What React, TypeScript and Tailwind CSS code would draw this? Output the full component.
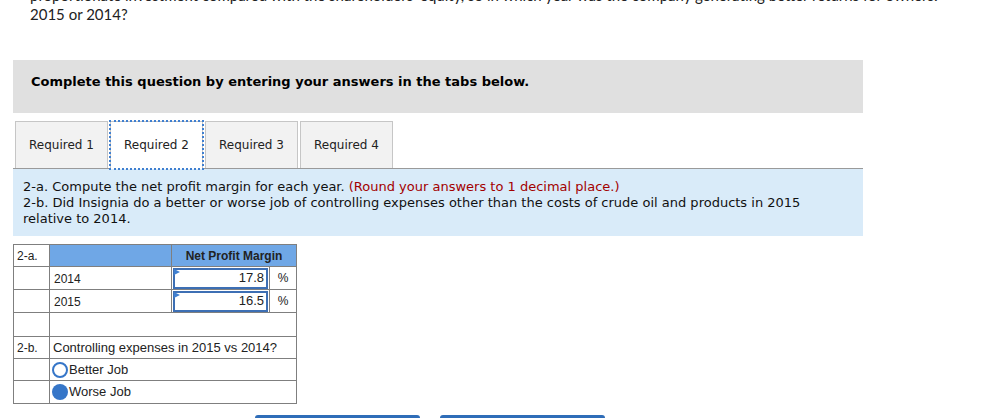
import React from "react";

const tabs = ["Required 1", "Required 2", "Required 3", "Required 4"];

function InputCell({ value }: { value: string }) {
  return (
    <td className="border border-[#7f7f7f] p-0 h-[23px]">
      <div className="relative h-[21px] mx-[1px] border-2 border-[#3d6fb4] bg-white flex items-center justify-end pr-[2px]">
        <span className="absolute left-[-1px] top-[-1px] w-0 h-0 border-t-[3px] border-b-[3px] border-l-[6px] border-t-transparent border-b-transparent border-l-[#3f7fd0]" />
        {value}
      </div>
    </td>
  );
}

function Radio({ checked }: { checked?: boolean }) {
  return checked ? (
    <span className="inline-block w-[16px] h-[16px] rounded-full bg-[#3676c8] mr-[1px]" />
  ) : (
    <span className="inline-block w-[16px] h-[16px] rounded-full border-2 border-[#3676c8] bg-white mr-[1px]" />
  );
}

export default function App() {
  return (
    <div className="w-[984px] h-[418px] overflow-hidden bg-white">
      <div className="px-[30px] mt-[-14px] text-[15px] leading-[19px] text-[#222] font-['Lato',sans-serif] whitespace-nowrap overflow-hidden">
        <p>
          proportionate investment compared with the shareholders' equity, so in which year was the company generating better returns for owners:
        </p>
        <p>2015 or 2014?</p>
      </div>

      <div className="mx-[13px] w-[850px] mt-[36px]">
        <div className="h-[53px] bg-[#e0e0e0] pt-[14px] pl-[18px]">
          <p className="font-['DejaVu_Sans',Verdana,sans-serif] font-bold text-[13px] leading-[16px] text-black">
            Complete this question by entering your answers in the tabs below.
          </p>
        </div>

        <div className="mt-[8px] flex gap-[2px] pl-[2px] border-b border-[#9a9a9a] font-['DejaVu_Sans',Verdana,sans-serif] text-[12px] text-[#222]">
          {tabs.map((t, i) =>
            i === 1 ? (
              <div
                key={t}
                className="w-[93px] h-[48px] -mb-[1px] pb-[1px] bg-white flex items-center justify-center outline-2 outline-dotted outline-[#3f7fd0] outline-offset-[-1px] border border-[#c6c6c6] border-b-0"
              >
                {t}
              </div>
            ) : (
              <div
                key={t}
                className="w-[93px] h-[47px] bg-[#f2f2f2] border border-[#c6c6c6] border-b-0 flex items-center justify-center"
              >
                {t}
              </div>
            )
          )}
        </div>

        <div className="bg-[#d9ebf9] pt-[10px] pb-[9px] pl-[10px] pr-[20px] font-['DejaVu_Sans',Verdana,sans-serif] text-[13px] leading-[16px] text-[#111]">
          <p>
            2-a. Compute the net profit margin for each year.{" "}
            <span className="text-[#a30000]">(Round your answers to 1 decimal place.)</span>
          </p>
          <p>
            2-b. Did Insignia do a better or worse job of controlling expenses other than the costs of crude oil and products in 2015 relative to 2014.
          </p>
        </div>

        <table className="mt-[8px] border-collapse font-['Liberation_Sans',Arial,sans-serif] text-[13px] text-[#222]">
          <colgroup>
            <col className="w-[36px]" />
            <col className="w-[122px]" />
            <col className="w-[98px]" />
            <col className="w-[27px]" />
          </colgroup>
          <tbody>
            <tr className="h-[22px]">
              <td className="border border-[#7f7f7f] px-[3px] text-[12px]">2-a.</td>
              <td className="border border-[#7f7f7f] bg-[#6fa7e6]" />
              <td colSpan={2} className="border border-[#7f7f7f] bg-[#6fa7e6] text-center font-bold text-[12px]">
                Net Profit Margin
              </td>
            </tr>
            <tr className="h-[23px]">
              <td className="border border-[#7f7f7f]" />
              <td className="border border-[#7f7f7f] px-[4px] pt-[2px] text-[12px]">2014</td>
              <InputCell value="17.8" />
              <td className="border border-[#7f7f7f] text-center text-[12px]">%</td>
            </tr>
            <tr className="h-[23px]">
              <td className="border border-[#7f7f7f]" />
              <td className="border border-[#7f7f7f] px-[4px] pt-[2px] text-[12px]">2015</td>
              <InputCell value="16.5" />
              <td className="border border-[#7f7f7f] text-center text-[12px]">%</td>
            </tr>
            <tr className="h-[24px]">
              <td className="border border-[#7f7f7f]" />
              <td colSpan={3} className="border border-[#7f7f7f]" />
            </tr>
            <tr className="h-[22px]">
              <td className="border border-[#7f7f7f] px-[3px] text-[12px]">2-b.</td>
              <td colSpan={3} className="border border-[#7f7f7f] px-[3px]">
                Controlling expenses in 2015 vs 2014?
              </td>
            </tr>
            <tr className="h-[22px]">
              <td className="border border-[#7f7f7f]" />
              <td colSpan={3} className="border border-[#7f7f7f] px-[2px]">
                <div className="flex items-center">
                  <Radio />
                  <span>Better Job</span>
                </div>
              </td>
            </tr>
            <tr className="h-[23px]">
              <td className="border border-[#7f7f7f]" />
              <td colSpan={3} className="border border-[#7f7f7f] px-[2px]">
                <div className="flex items-center">
                  <Radio checked />
                  <span>Worse Job</span>
                </div>
              </td>
            </tr>
          </tbody>
        </table>

        <div className="mt-[11px] ml-[242px] flex gap-[20px]">
          <div className="w-[165px] h-[30px] rounded-[3px] bg-[#2f6db8]" />
          <div className="w-[165px] h-[30px] rounded-[3px] bg-[#2f6db8]" />
        </div>
      </div>
    </div>
  );
}
